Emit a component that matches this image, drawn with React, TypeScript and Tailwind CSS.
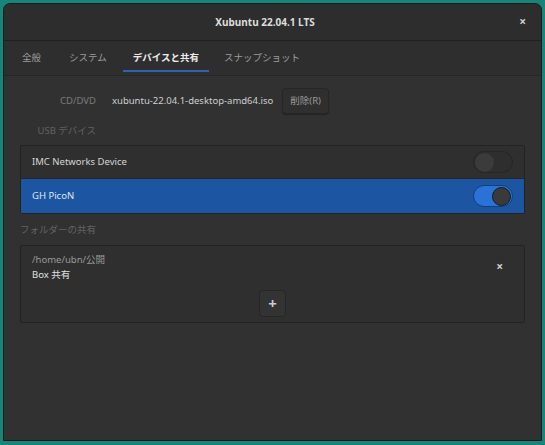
import React from "react";

function Toggle({ on }: { on: boolean }) {
  return (
    <div
      className={`flex h-[22px] w-[40px] items-center rounded-full border p-[1px] ${
        on ? "justify-end border-[#163e78] bg-[#2a72d6]" : "justify-start border-[#262626] bg-[#2e2e2e]"
      }`}
    >
      <div
        className={`h-[19px] w-[19px] rounded-full ${
          on ? "border border-[#1b1b1b] bg-[#3a3a3a]" : "bg-[#3b3b3b]"
        }`}
      />
    </div>
  );
}

export default function App() {
  return (
    <div
      className="h-[445px] w-[545px] bg-[#178577] p-[3px]"
      style={{ fontFamily: '"Noto Sans", "Noto Sans CJK JP", sans-serif' }}
    >
      <div className="flex h-[438px] w-[539px] flex-col overflow-hidden rounded-t-[7px] border border-[#1c1c1c] bg-[#313131]">
        {/* header */}
        <div className="flex h-[37px] shrink-0 items-center border-b border-[#202020] bg-[#2d2d2d]">
          <div className="flex-1" />
          <div className="text-[10px] font-bold text-[#dcdcdc]">Xubuntu 22.04.1 LTS</div>
          <div className="flex flex-1 justify-end pr-[15px]">
            <span className="text-[12px] font-bold leading-none text-[#cfcfcf]">×</span>
          </div>
        </div>
        {/* tabs */}
        <div className="flex h-[35px] shrink-0 items-stretch border-b border-[#262626] bg-[#2e2e2e] pl-[8px] text-[9.5px]">
          <div className="flex items-center px-[10px] text-[#9c9c9c]">全般</div>
          <div className="ml-[8px] flex items-center px-[10px] text-[#9c9c9c]">システム</div>
          <div className="mb-[3px] ml-[6px] flex items-center border-b-[2px] border-[#2f62b0] px-[10px] pt-[5px] font-bold text-[#ececec]">
            デバイスと共有
          </div>
          <div className="ml-[5px] flex items-center px-[10px] text-[#9c9c9c]">スナップショット</div>
        </div>
        {/* content */}
        <div className="flex flex-col px-[16px] pt-[12px] text-[9.5px]">
          <div className="grid grid-cols-[76px_1fr] items-center gap-x-[16px]">
            <div className="text-right text-[#7c7c7c]">CD/DVD</div>
            <div className="flex items-center gap-[9px]">
              <span className="text-[#cfcfcf]">xubuntu-22.04.1-desktop-amd64.iso</span>
              <div className="flex h-[26px] items-center rounded-[4px] border border-[#262626] bg-[#2f2f2f] px-[7px] text-[#9a9a9a] shadow-[0_1px_1px_rgba(0,0,0,0.3)]">
                削除(R)
              </div>
            </div>
            <div className="mt-[10px] text-right text-[#626262]">USB デバイス</div>
            <div />
          </div>

          <div className="mt-[7px] flex flex-col rounded-[2px] border border-[#232323] bg-[#2f2f2f]">
            <div className="flex h-[33px] items-center justify-between border-b border-[#262626] pl-[11px] pr-[11px]">
              <span className="text-[#d6d6d6]">IMC Networks Device</span>
              <Toggle on={false} />
            </div>
            <div className="flex h-[34px] items-center justify-between bg-[#1c55a1] pl-[11px] pr-[11px]">
              <span className="text-[#dfe6f0]">GH PicoN</span>
              <Toggle on={true} />
            </div>
          </div>

          <div className="mt-[9px] text-[#626262]">フォルダーの共有</div>

          <div className="mt-[7px] flex h-[78px] flex-col rounded-[2px] border border-[#232323] bg-[#2f2f2f]">
            <div className="flex items-center justify-between pl-[11px] pr-[21px] pt-[6px]">
              <div className="flex flex-col leading-[15px]">
                <span className="text-[#9a9a9a]">/home/ubn/公開</span>
                <span className="text-[#e0e0e0]">Box 共有</span>
              </div>
              <span className="text-[12px] font-bold text-[#d0d0d0]">×</span>
            </div>
            <div className="mt-[8px] flex justify-center">
              <div className="flex h-[27px] w-[27px] items-center justify-center rounded-[4px] border border-[#262626] bg-[#333333] text-[15px] font-bold leading-none text-[#cccccc]">
                +
              </div>
            </div>
          </div>
        </div>
      </div>
    </div>
  );
}
